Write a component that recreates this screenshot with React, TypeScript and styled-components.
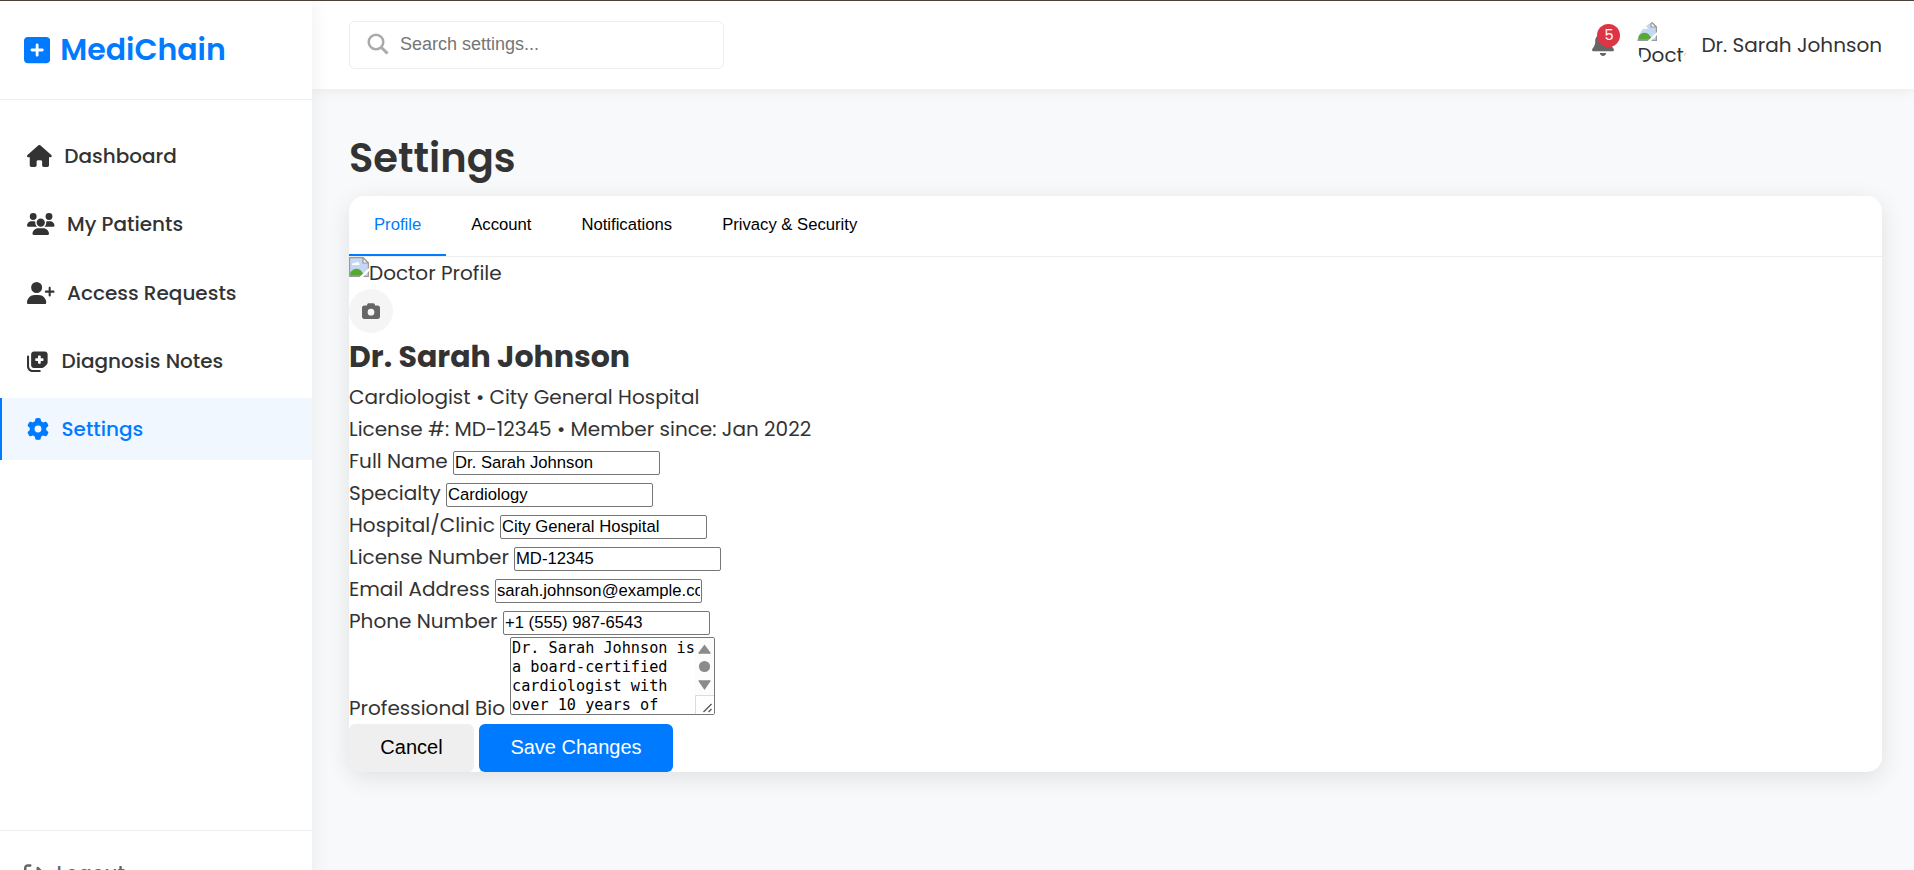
import React from "react";
import styled, { createGlobalStyle, css } from "styled-components";
import {
  FaBell,
  FaCamera,
  FaGear,
  FaHouse,
  FaNotesMedical,
  FaRightFromBracket,
  FaSquarePlus,
  FaUserPlus,
  FaUsers,
} from "react-icons/fa6";

const colors = {
  primary: "#007bff",
  text: "#333333",
  muted: "#666666",
  line: "#eeeeee",
  page: "#f8f9fb",
};

const sans = `"Liberation Sans", Arial, sans-serif`;

const GlobalStyle = createGlobalStyle`
  * { box-sizing: border-box; margin: 0; padding: 0; }
  body {
    background: ${colors.page};
    color: ${colors.text};
    font: 400 20px/32px Poppins, Inter, sans-serif;
    overflow: hidden;
  }
  svg { display: block; flex: none; }
`;

const Page = styled.div`
  display: flex;
  height: 870px;
  overflow: hidden;
  border-top: 1px solid #4a4038;
`;

const Sidebar = styled.aside`
  display: flex;
  flex-direction: column;
  flex: none;
  width: 312px;
  height: 933px;
  background: #fff;
  box-shadow: 0 0 19px rgba(0, 0, 0, 0.07);
  position: relative;
  z-index: 2;
`;

const Brand = styled.div`
  display: flex;
  align-items: center;
  gap: 10px;
  height: 99px;
  padding: 0 24px;
  border-bottom: 1px solid ${colors.line};
  color: ${colors.primary};
  font-size: 30px;
  font-weight: 600;
  svg {
    width: 26.25px;
    height: 30px;
  }
`;

const Nav = styled.nav`
  display: flex;
  flex-direction: column;
  gap: 6.25px;
  padding-top: 25px;
`;

const NavItem = styled.a<{ $active?: boolean; $iconWidth: number }>`
  display: flex;
  align-items: center;
  gap: 12.5px;
  height: 62px;
  padding-left: 25px;
  border-left: 2px solid transparent;
  font-weight: 500;
  svg {
    width: ${(p) => p.$iconWidth}px;
    height: 22px;
  }
  ${(p) =>
    p.$active &&
    css`
      background: #f0f7ff;
      border-left-color: ${colors.primary};
      color: ${colors.primary};
    `}
`;

const SidebarFooter = styled.div`
  display: flex;
  align-items: center;
  gap: 12.5px;
  height: 84px;
  margin-top: 370px;
  padding: 0 24px;
  border-top: 1px solid ${colors.line};
  color: ${colors.muted};
  font-weight: 500;
`;

const Main = styled.main`
  display: flex;
  flex-direction: column;
  flex: 1;
`;

const Header = styled.header`
  display: flex;
  align-items: center;
  justify-content: space-between;
  height: 88px;
  padding: 0 32px 0 37px;
  background: #fff;
  box-shadow: 0 2px 12px rgba(0, 0, 0, 0.06);
`;

const SearchBox = styled.label`
  display: flex;
  align-items: center;
  gap: 11px;
  width: 375px;
  height: 48px;
  padding: 0 17px 2px;
  border: 1px solid ${colors.line};
  border-radius: 6px;
`;

const SearchInput = styled.input`
  flex: 1;
  min-width: 0;
  border: 0;
  outline: 0;
  background: transparent;
  font: 18px ${sans};
  &::placeholder {
    color: #757575;
  }
`;

const UserArea = styled.div`
  display: flex;
  align-items: center;
`;

const BellWrap = styled.div`
  position: relative;
  margin: 0 23px 4px 0;
  color: ${colors.muted};
  svg {
    width: 22px;
    height: 25px;
  }
`;

const Badge = styled.span`
  position: absolute;
  top: -7px;
  left: 5px;
  width: 23px;
  height: 23px;
  border-radius: 50%;
  background: #dc3545;
  color: #fff;
  font-size: 14.5px;
  line-height: 23px;
  text-align: center;
`;

const Avatar = styled.div`
  width: 50px;
  height: 50px;
  margin-right: 14px;
  padding-top: 1px;
  border-radius: 50%;
  overflow: hidden;
  line-height: 28px;
  white-space: nowrap;
`;

const Content = styled.section`
  padding: 37px 32px 0 37px;
`;

const Title = styled.h1`
  height: 70px;
  font-size: 40px;
  font-weight: 600;
  line-height: 64px;
`;

const Card = styled.div`
  height: 576px;
  overflow: hidden;
  border-radius: 15px;
  background: #fff;
  box-shadow: 0 6px 25px rgba(0, 0, 0, 0.1);
`;

const Tabs = styled.div`
  display: flex;
  height: 61px;
  border-bottom: 1px solid ${colors.line};
`;

const Tab = styled.button<{ $active?: boolean }>`
  height: 60px;
  padding: 0 25px 1px;
  border: 0;
  border-bottom: 2px solid ${(p) => (p.$active ? colors.primary : "transparent")};
  background: none;
  color: ${(p) => (p.$active ? colors.primary : "#000")};
  font: 16.667px ${sans};
`;

const ProfileImage = styled.div`
  display: flex;
  height: 32px;
`;

const CameraButton = styled.button`
  display: flex;
  align-items: center;
  justify-content: center;
  width: 44px;
  height: 44px;
  border: 0;
  border-radius: 50%;
  background: #f5f5f5;
  color: ${colors.muted};
`;

const DoctorName = styled.h2`
  font-size: 30px;
  font-weight: 700;
  line-height: 48px;
`;

const Detail = styled.p`
  height: 32px;
`;

const Field = styled.div<{ $tall?: boolean }>`
  display: flex;
  align-items: flex-start;
  height: ${(p) => (p.$tall ? 87 : 32)}px;
`;

const FieldLabel = styled.label<{ $width: number; $low?: boolean }>`
  flex: none;
  width: ${(p) => p.$width}px;
  padding-top: ${(p) => (p.$low ? 55 : 0)}px;
  white-space: nowrap;
`;

const TextInput = styled.input`
  width: 207px;
  height: 24px;
  margin-top: 6px;
  padding: 0 1px;
  border: 1px solid #767676;
  border-radius: 2px;
  background: #fff;
  color: #000;
  font: 16.667px ${sans};
`;

const BioBox = styled.div`
  display: flex;
  width: 205px;
  height: 78px;
  border: 1px solid #767676;
  border-radius: 2px;
  overflow: hidden;
`;

const BioText = styled.div`
  flex: 1;
  padding: 1px 0 0 1px;
  color: #000;
  font: 15.2px/19px "DejaVu Sans Mono", monospace;
  white-space: pre;
`;

const Scrollbar = styled.div`
  width: 19px;
  background: #fcfcfc;
`;

const Actions = styled.div`
  display: flex;
  gap: 5px;
`;

const Button = styled.button<{ $primary?: boolean }>`
  width: ${(p) => (p.$primary ? 194 : 125)}px;
  height: 48px;
  padding-bottom: 1px;
  border: 0;
  border-radius: 6px;
  background: ${(p) => (p.$primary ? colors.primary : "#efefef")};
  color: ${(p) => (p.$primary ? "#fff" : "#000")};
  font: 20px ${sans};
`;

const MissingImage = () => (
  <svg width="20" height="20" viewBox="0 0 20 20">
    <path d="M.6.6H14l5.400 5.400v13.400H.6z" fill="#c6d6f5" stroke="#9a9a9a" strokeWidth="1.200" />
    <path d="M3 8c0-2 2-2.500 3-1.500C7 4 11 5 10.500 8z" fill="#fff" />
    <path d="M1.200 18.800v-3C4 11 10 10 13 15l3 3.800z" fill="#55a934" />
    <path d="M14 .6v5.400h5.400z" fill="#f6f6f6" stroke="#9a9a9a" strokeWidth="1.200" />
    <path d="M10.500 20 20 11v3L14 20z" fill="#fff" />
  </svg>
);

const SearchIcon = () => (
  <svg width="22" height="22" viewBox="0 0 22 22" fill="none" stroke="#aaaaaa">
    <circle cx="9" cy="9" r="7.300" strokeWidth="2.500" />
    <path d="m14.200 14.200 6.300 6.300" strokeWidth="3" />
  </svg>
);

const ScrollParts = () => (
  <svg width="19" height="76" viewBox="0 0 19 76" fill="#8b8b8b">
    <path d="M9.500 6.500 15 14a1 1 0 0 1-1 1.800H5A1 1 0 0 1 4 14z" />
    <circle cx="9.500" cy="28.500" r="5.600" />
    <path d="M9.500 52 15 44a1 1 0 0 0-1-1.800H5A1 1 0 0 0 4 44z" />
    <path d="M0 57.500h19V76H0z" fill="#fff" />
    <path d="M.5 76V57.500H19" fill="none" stroke="#dcdcdc" />
    <path d="m8.500 74 8-8M13.500 74l3-3" fill="none" stroke="#555" strokeWidth="1.300" />
  </svg>
);

const navItems = [
  { label: "Dashboard", icon: <FaHouse />, iconWidth: 24.75 },
  { label: "My Patients", icon: <FaUsers />, iconWidth: 27.5 },
  { label: "Access Requests", icon: <FaUserPlus />, iconWidth: 27.5 },
  { label: "Diagnosis Notes", icon: <FaNotesMedical />, iconWidth: 22 },
  { label: "Settings", icon: <FaGear />, iconWidth: 22, active: true },
];

const fields = [
  { label: "Full Name", value: "Dr. Sarah Johnson", width: 104 },
  { label: "Specialty", value: "Cardiology", width: 97 },
  { label: "Hospital/Clinic", value: "City General Hospital", width: 151 },
  { label: "License Number", value: "MD-12345", width: 165 },
  { label: "Email Address", value: "sarah.johnson@example.com", width: 146 },
  { label: "Phone Number", value: "+1 (555) 987-6543", width: 154 },
];

const bio = "Dr. Sarah Johnson is\na board-certified\ncardiologist with\nover 10 years of";

export default function App() {
  return (
    <Page>
      <GlobalStyle />
      <Sidebar>
        <Brand>
          <FaSquarePlus />
          MediChain
        </Brand>
        <Nav>
          {navItems.map((item) => (
            <NavItem key={item.label} $active={item.active} $iconWidth={item.iconWidth}>
              {item.icon}
              {item.label}
            </NavItem>
          ))}
        </Nav>
        <SidebarFooter>
          <FaRightFromBracket size={20} />
          Logout
        </SidebarFooter>
      </Sidebar>
      <Main>
        <Header>
          <SearchBox>
            <SearchIcon />
            <SearchInput placeholder="Search settings..." />
          </SearchBox>
          <UserArea>
            <BellWrap>
              <FaBell />
              <Badge>5</Badge>
            </BellWrap>
            <Avatar>
              <MissingImage />
              Doctor
            </Avatar>
            <span>Dr. Sarah Johnson</span>
          </UserArea>
        </Header>
        <Content>
          <Title>Settings</Title>
          <Card>
            <Tabs>
              <Tab $active>Profile</Tab>
              <Tab>Account</Tab>
              <Tab>Notifications</Tab>
              <Tab>Privacy &amp; Security</Tab>
            </Tabs>
            <ProfileImage>
              <MissingImage />
              Doctor Profile
            </ProfileImage>
            <CameraButton>
              <FaCamera size={18} />
            </CameraButton>
            <DoctorName>Dr. Sarah Johnson</DoctorName>
            <Detail>Cardiologist • City General Hospital</Detail>
            <Detail>License #: MD-12345 • Member since: Jan 2022</Detail>
            {fields.map((field) => (
              <Field key={field.label}>
                <FieldLabel $width={field.width}>{field.label}</FieldLabel>
                <TextInput defaultValue={field.value} />
              </Field>
            ))}
            <Field $tall>
              <FieldLabel $width={161} $low>
                Professional Bio
              </FieldLabel>
              <BioBox>
                <BioText>{bio}</BioText>
                <Scrollbar>
                  <ScrollParts />
                </Scrollbar>
              </BioBox>
            </Field>
            <Actions>
              <Button>Cancel</Button>
              <Button $primary>Save Changes</Button>
            </Actions>
          </Card>
        </Content>
      </Main>
    </Page>
  );
}
